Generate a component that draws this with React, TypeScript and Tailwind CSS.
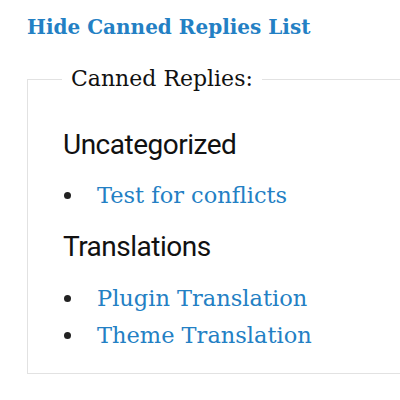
const groups = [
  { name: 'Uncategorized', head: 'mt-[36px]', list: 'mt-[14px]', items: ['Test for conflicts'] },
  { name: 'Translations', head: 'mt-[15px]', list: 'mt-[15px]', items: ['Plugin Translation', 'Theme Translation'] },
];

export default function App() {
  return (
    <div className="h-[400px] w-[400px] overflow-hidden bg-white pl-[27px] pt-[12px]">
      <a href="#" className="block font-['Roboto_Slab','DejaVu_Serif',serif] text-[20px] font-bold leading-[30px] text-[#2380c4]">
        Hide Canned Replies List
      </a>
      <fieldset className="mt-[25px] w-[420px] border border-[#e2e2e2] pb-[19px] pl-[35px]">
        <legend className="ml-[-1px] px-[9px] font-['DejaVu_Serif',serif] text-[22px] leading-[24px] text-[#111]">
          Canned Replies:
        </legend>
        {groups.map((g) => (
          <div key={g.name}>
            <h3 className={`${g.head} font-['Roboto',sans-serif] text-[28px] leading-[36px] tracking-[-0.5px] text-[#111]`}>
              {g.name}
            </h3>
            <ul className={g.list}>
              {g.items.map((item) => (
                <li key={item} className="flex items-center gap-[26px] pl-[1px] font-['DejaVu_Serif',serif] text-[22.5px] leading-[37px]">
                  <span className="h-[7px] w-[7px] shrink-0 rounded-full bg-[#222]" />
                  <a href="#" className="text-[#2380c4]">{item}</a>
                </li>
              ))}
            </ul>
          </div>
        ))}
      </fieldset>
    </div>
  );
}
